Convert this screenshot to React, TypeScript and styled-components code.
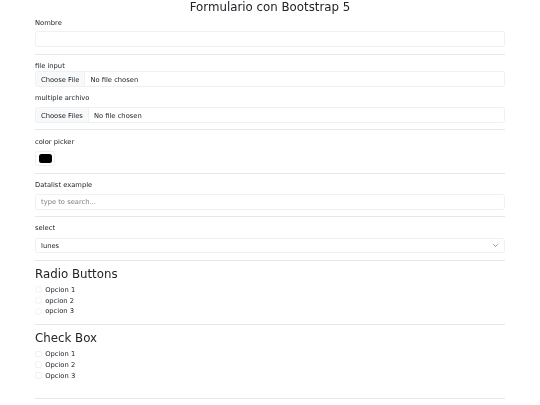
import React from "react";
import styled, { createGlobalStyle } from "styled-components";

const GlobalStyle = createGlobalStyle`
  * { box-sizing: border-box; }
  html, body { margin: 0; padding: 0; background: #ffffff; }
  body {
    font-family: "DejaVu Sans", "Noto Sans", sans-serif;
    font-size: 6.75px;
    line-height: 10.125px;
    color: #212529;
    -webkit-font-smoothing: antialiased;
  }
`;

const Container = styled.div`
  width: 470px;
  margin: 0 auto;
  will-change: transform;
`;

const Title = styled.h3`
  margin: 0 0 3.4px;
  font-size: 11.8px;
  line-height: 14.2px;
  font-weight: 400;
  text-align: center;
`;

const SectionTitle = styled.h3`
  margin: 0 0 3.4px;
  font-size: 11.8px;
  line-height: 14.2px;
  font-weight: 400;
`;

const Field = styled.div<{ $mb?: number }>`
  display: flex;
  flex-direction: column;
  align-items: flex-start;
  margin-bottom: ${(p) => p.$mb ?? 0}px;
`;

const Label = styled.label<{ $mb?: number }>`
  display: block;
  margin-bottom: ${(p) => p.$mb ?? 3.4}px;
  color: #212529;
`;

const Divider = styled.hr`
  width: 100%;
  margin: 6.4px 0;
  border: 0;
  border-top: 1px solid #e6e7e8;
`;

const TextInput = styled.input`
  display: block;
  width: 100%;
  height: 16px;
  padding: 2px 5px;
  font: inherit;
  color: #212529;
  background: #fff;
  border: 1px solid #eef0f2;
  border-radius: 2.5px;
  outline: none;
  &::placeholder { color: #7d8186; }
`;

const FileInput = styled.input`
  display: block;
  width: 100%;
  height: 16px;
  padding: 2px 5px;
  font: inherit;
  color: #212529;
  background: #fff;
  border: 1px solid #eef0f2;
  border-radius: 2.5px;
  overflow: hidden;
  &::file-selector-button {
    height: 16px;
    margin: -2px 5px -2px -5px;
    padding: 2px 5px;
    font: inherit;
    color: #212529;
    background: #f8f9fa;
    border: 0;
    border-right: 1px solid #eef0f2;
    border-radius: 0;
  }
`;

const ColorInput = styled.input`
  display: block;
  width: 20.25px;
  height: 15.5px;
  padding: 2px 2.5px;
  margin: 0;
  background: #fff;
  border: 1px solid #eef0f2;
  border-radius: 2.5px;
  cursor: pointer;
  appearance: none;
  &::-webkit-color-swatch-wrapper { padding: 0; }
  &::-webkit-color-swatch { border: 0; border-radius: 2.5px; }
`;

const chevron = `url("data:image/svg+xml,%3csvg xmlns='http://www.w3.org/2000/svg' viewBox='0 0 16 16'%3e%3cpath fill='none' stroke='%23555b61' stroke-linecap='round' stroke-linejoin='round' stroke-width='2' d='m2 5 6 6 6-6'/%3e%3c/svg%3e")`;

const Select = styled.select`
  display: block;
  width: 100%;
  height: 15.5px;
  padding: 2px 15px 2px 5px;
  font: inherit;
  color: #212529;
  background-color: #fff;
  background-image: ${chevron};
  background-repeat: no-repeat;
  background-position: right 5px center;
  background-size: 6.75px 5px;
  border: 1px solid #eef0f2;
  border-radius: 2.5px;
  appearance: none;
  outline: none;
`;

const CheckList = styled.div<{ $pb?: number }>`
  display: flex;
  flex-direction: column;
  padding-bottom: ${(p) => p.$pb ?? 0}px;
`;

const CheckRow = styled.label`
  display: flex;
  align-items: center;
  gap: 3.4px;
  min-height: 10.125px;
  margin-bottom: 0.84px;
  color: #212529;
`;

const CheckMark = styled.input<{ $round?: boolean }>`
  width: 6.75px;
  height: 6.75px;
  margin: 0;
  flex: none;
  appearance: none;
  background: #fff;
  border: 1px solid #eef0f2;
  border-radius: ${(p) => (p.$round ? "50%" : "2px")};
`;

const radios = ["Opcion 1", "opcion 2", "opcion 3"];
const checks = ["Opcion 1", "Opcion 2", "Opcion 3"];

export default function App() {
  return (
    <>
      <GlobalStyle />
      <Container>
        <Title>Formulario con Bootstrap 5</Title>

        <Field>
          <Label htmlFor="nombre">Nombre</Label>
          <TextInput id="nombre" type="text" />
        </Field>
        <Divider />

        <Field $mb={6.2}>
          <Label htmlFor="file1" $mb={0}>file input</Label>
          <FileInput id="file1" type="file" />
        </Field>
        <Field>
          <Label htmlFor="file2">multiple archivo</Label>
          <FileInput id="file2" type="file" multiple />
        </Field>
        <Divider />

        <Field>
          <Label htmlFor="color" $mb={4.2}>color picker</Label>
          <ColorInput id="color" type="color" defaultValue="#000000" />
        </Field>
        <Divider />

        <Field>
          <Label htmlFor="datalist">Datalist example</Label>
          <TextInput id="datalist" list="opciones" placeholder="type to search..." />
          <datalist id="opciones">
            <option value="San Francisco" />
            <option value="New York" />
            <option value="Seattle" />
          </datalist>
        </Field>
        <Divider />

        <Field>
          <Label htmlFor="dia" $mb={4.2}>select</Label>
          <Select id="dia" defaultValue="lunes">
            <option value="lunes">lunes</option>
            <option value="martes">martes</option>
            <option value="miercoles">miercoles</option>
          </Select>
        </Field>
        <Divider />

        <SectionTitle>Radio Buttons</SectionTitle>
        <CheckList>
          {radios.map((r, i) => (
            <CheckRow key={r}>
              <CheckMark type="radio" name="radio" $round value={i} />
              {r}
            </CheckRow>
          ))}
        </CheckList>
        <Divider />

        <SectionTitle>Check Box</SectionTitle>
        <CheckList $pb={10.4}>
          {checks.map((c) => (
            <CheckRow key={c}>
              <CheckMark type="checkbox" />
              {c}
            </CheckRow>
          ))}
        </CheckList>
        <Divider />
      </Container>
    </>
  );
}
